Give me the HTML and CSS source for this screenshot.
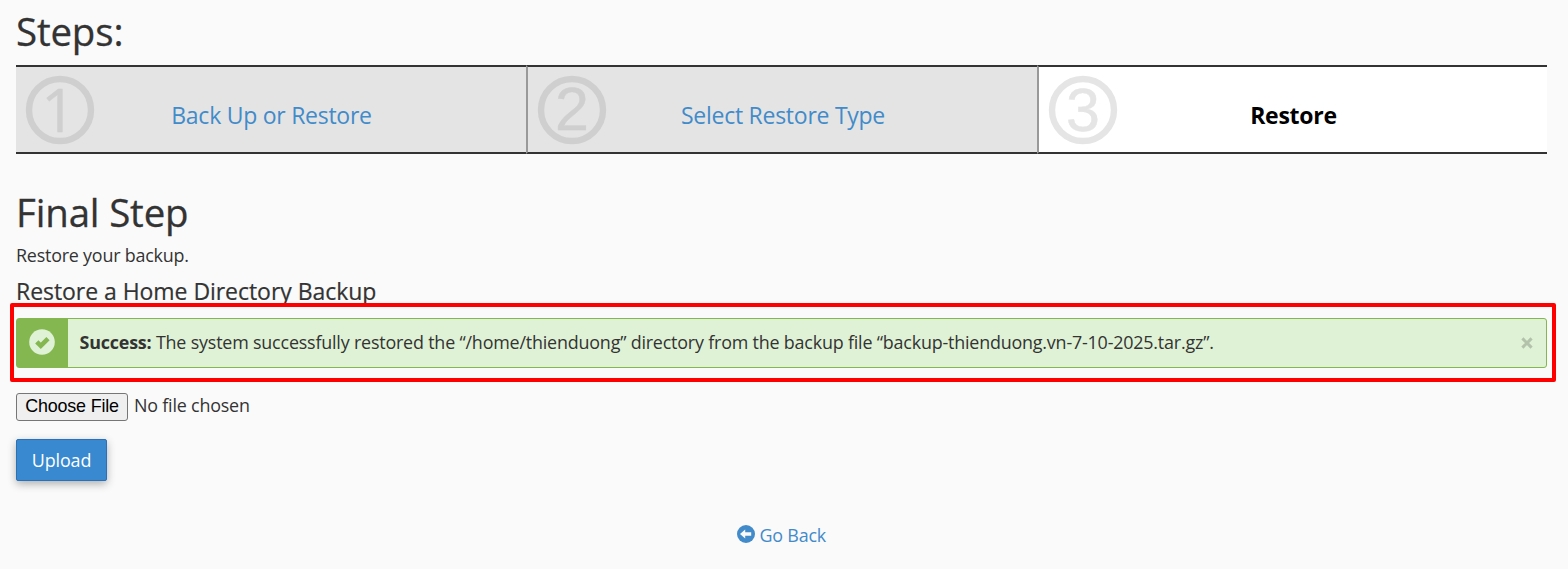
FILE: index.html
```html
<!DOCTYPE html>
<html lang="en">
<head>
<meta charset="utf-8">
<title>Restore</title>
<link rel="stylesheet" href="styles.css">
</head>
<body>
<main class="page">
  <h2 class="title">Steps:</h2>
  <ol class="steps">
    <li class="step">
      <svg class="step-num" viewBox="0 0 68 68"><circle cx="34" cy="34" r="31"/><text class="digit-one" x="32.5" y="55.5">1</text></svg>
      <a class="step-label">Back Up or Restore</a>
    </li>
    <li class="step">
      <svg class="step-num" viewBox="0 0 68 68"><circle cx="34" cy="34" r="31"/><text x="34" y="54">2</text></svg>
      <a class="step-label">Select Restore Type</a>
    </li>
    <li class="step step-active">
      <svg class="step-num" viewBox="0 0 68 68"><circle cx="34" cy="34" r="31"/><text x="34" y="55">3</text></svg>
      <span class="step-label">Restore</span>
    </li>
  </ol>
  <h2 class="title title-final">Final Step</h2>
  <p class="intro">Restore your backup.</p>
  <h4 class="subtitle">Restore a Home Directory Backup</h4>
  <div class="alert">
    <div class="alert-icon">
      <svg width="26" height="26" viewBox="0 0 26 26"><circle cx="13" cy="13" r="12.8" fill="#dff2d6"/><path d="M7.8 12.8l4 4L19 9.6" fill="none" stroke="#84b750" stroke-width="4.6"/></svg>
    </div>
    <div class="alert-message"><strong>Success:</strong> <span class="alert-text">The system successfully restored the “/home/thienduong” directory from the backup file “backup-thienduong.vn-7-10-2025.tar.gz”.</span></div>
    <svg class="alert-close" width="12" height="12" viewBox="0 0 12 12"><path d="M1.4 1.4l9.2 9.2M10.6 1.4L1.4 10.6" fill="none" stroke="#b2c2ab" stroke-width="3"/></svg>
    <div class="highlight"></div>
  </div>
  <div class="file">
    <button class="file-button">Choose File</button>
    <span class="file-name">No file chosen</span>
  </div>
  <button class="upload">Upload</button>
  <a class="back">
    <svg width="18" height="18" viewBox="0 0 18 18"><circle cx="9" cy="9" r="9" fill="#428bca"/><path d="M3 9l5.2-4.6v2.9h6v3.4h-6v2.9z" fill="#fafafa"/></svg>
    <span class="back-label">Go Back</span>
  </a>
</main>
</body>
</html>
```

FILE: styles.css
```css
* { box-sizing: border-box; }
body {
  margin: 0;
  background: #fafafa;
  color: #333;
  font-family: "Open Sans", sans-serif;
  font-size: 17.9px;
  letter-spacing: -0.21px;
}
.page {
  display: flex;
  flex-direction: column;
  align-items: flex-start;
  width: 1568px;
  height: 569px;
  padding: 10px 21px 0 16px;
  overflow: hidden;
}
.title {
  margin: 0;
  font-size: 38.4px;
  font-weight: 400;
  line-height: 42px;
  letter-spacing: -0.14px;
  -webkit-text-stroke: 0.3px #333;
}
.steps {
  display: grid;
  grid-template-columns: 510px 511px 510px;
  width: 100%;
  height: 89px;
  margin: 13px 0 0;
  padding: 0;
  list-style: none;
}
.step {
  display: grid;
  grid-template-columns: 68px 1fr;
  padding-left: 10px;
  background: #e4e4e4;
  border-top: 2px solid #333;
  border-bottom: 2px solid #333;
}
.step + .step { border-left: 2px solid #999; }
.step-active { background: #fff; color: #000; font-weight: 700; }
.step-num {
  width: 68px;
  height: 68px;
  margin-top: 9px;
  overflow: visible;
}
.step-num circle { fill: none; stroke: #cfcfcf; stroke-width: 6.4; }
.step-num text {
  fill: #cfcfcf;
  stroke: #cfcfcf;
  stroke-width: 0.4;
  font: 400 61px "Liberation Sans", sans-serif;
  letter-spacing: 0;
  text-anchor: middle;
}
.step-num .digit-one { font: 400 60px "Open Sans", sans-serif; }
.step-active .step-num circle { stroke: #e5e5e5; }
.step-active .step-num text { fill: #e5e5e5; stroke: #e5e5e5; }
.step-label {
  padding-top: 32px;
  padding-right: 77px;
  font-size: 23px;
  line-height: 32px;
  letter-spacing: -0.26px;
  text-align: center;
  white-space: nowrap;
}
a { color: #428bca; }
.title-final { margin-top: 37px; }
.intro { margin: 9px 0 0; line-height: 26px; }
.subtitle {
  margin: 10px 0 0;
  font-size: 23px;
  font-weight: 400;
  line-height: 26px;
  letter-spacing: -0.05px;
  -webkit-text-stroke: 0.2px #333;
}
.alert {
  position: relative;
  display: flex;
  align-items: center;
  width: 100%;
  height: 50px;
  margin-top: 14px;
  padding-right: 13px;
  background: #dff2d6;
  border: 1px solid #84b750;
  border-radius: 3px;
}
.alert-icon {
  display: flex;
  justify-content: center;
  width: 51px;
  height: 48px;
  padding: 10px 1px 0 0;
  background: #84b750;
}
.alert-message {
  flex: 1;
  padding: 0 0 2px 11.5px;
  letter-spacing: -0.19px;
  white-space: nowrap;
}
.highlight {
  position: absolute;
  inset: -16px -10px -15px -7px;
  border: 4px solid #f00;
  border-radius: 2px;
}
.file { display: flex; margin-top: 25px; }
.file-button {
  width: 112px;
  height: 28px;
  padding: 0 0 2px;
  border: 1px solid #767676;
  border-radius: 3px;
  background: #efefef;
  color: #000;
  font: 17.9px "Liberation Sans", sans-serif;
  letter-spacing: -0.17px;
}
.file-name { margin-left: 6px; line-height: 25px; letter-spacing: -0.2px; }
.upload {
  width: 91px;
  height: 42px;
  margin-top: 18px;
  padding: 0;
  background: #3889cf;
  border: 1px solid #2d70b5;
  border-radius: 2px;
  box-shadow: 0 3px 8px rgba(0, 0, 0, .3);
  color: #fff;
  font: 17.9px "Open Sans", sans-serif;
  letter-spacing: -0.1px;
}
.back {
  display: flex;
  align-self: center;
  gap: 4.5px;
  margin-top: 44px;
}
.back-label { line-height: 20px; }
```
